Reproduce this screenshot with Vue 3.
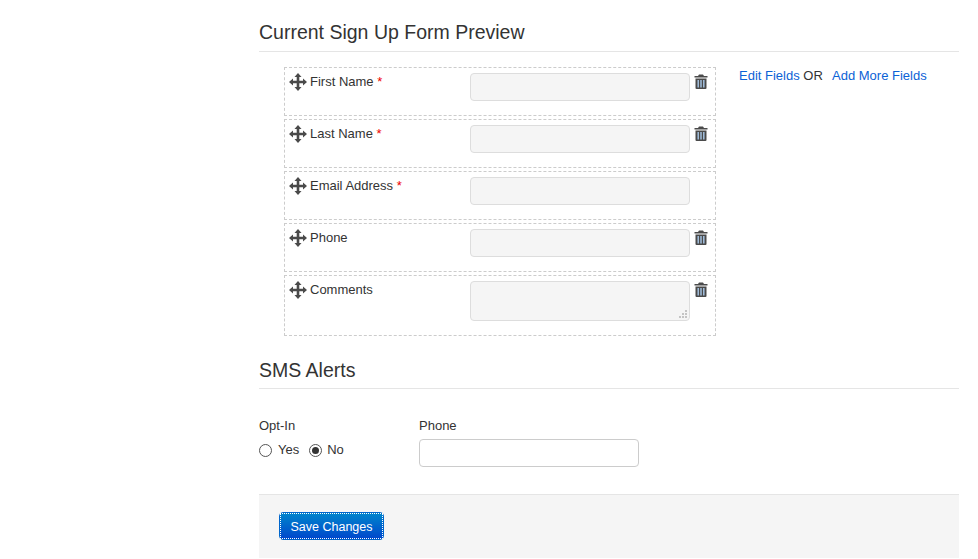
<template>
  <div class="page">
    <h2 class="title">Current Sign Up Form Preview</h2>

    <div class="preview">
      <div class="fields">
        <div v-for="field in fields" :key="field.label" class="field" :class="{ tall: field.textarea }">
          <div class="label-wrap">
            <svg class="move" viewBox="0 0 18 18" width="18" height="18">
              <path d="M9 0 L12.5 4 H10.3 V7.7 H14 V5.5 L18 9 L14 12.5 V10.3 H10.3 V14 H12.5 L9 18 L5.5 14 H7.7 V10.3 H4 V12.5 L0 9 L4 5.5 V7.7 H7.7 V4 H5.5 Z" fill="#4a4a4a" />
            </svg>
            <span class="label">{{ field.label }}<span v-if="field.required" class="req"> *</span></span>
          </div>
          <div class="control" :class="{ area: field.textarea }">
            <svg v-if="field.textarea" class="grip" viewBox="0 0 9 9" width="9" height="9">
              <path d="M6 0h2v2H6zM3 3h2v2H3zM6 3h2v2H6zM0 6h2v2H0zM3 6h2v2H3zM6 6h2v2H6z" fill="#c4c4c4" />
            </svg>
          </div>
          <svg v-if="field.removable" class="trash" viewBox="0 0 14 15" width="14" height="15">
            <path d="M5 0.5h4l1 1.5h3.5v1.5H0.5V2H4z" fill="#4a4a4a" />
            <path d="M1.5 4.5h11V14a1 1 0 0 1-1 1h-9a1 1 0 0 1-1-1z" fill="#4a4a4a" />
            <path d="M3.5 6h1.4v7.5H3.5zM6.3 6h1.4v7.5H6.3zM9.1 6h1.4v7.5H9.1z" fill="#a9c8e8" />
          </svg>
        </div>
      </div>
      <div class="links">
        <a href="#">Edit Fields</a> OR &nbsp;<a class="more" href="#">Add More Fields</a>
      </div>
    </div>

    <h2 class="title sms">SMS Alerts</h2>

    <div class="sms-row">
      <div class="opt">
        <div class="small-label">Opt-In</div>
        <div class="radios">
          <span class="radio"></span><span class="radio-text">Yes</span>
          <span class="radio on"></span><span>No</span>
        </div>
      </div>
      <div class="phone">
        <div class="small-label">Phone</div>
        <input class="phone-input" type="text" />
      </div>
    </div>

    <div class="actions">
      <button class="save" type="button"><span>Save Changes</span></button>
    </div>
  </div>
</template>

<script setup>
const fields = [
  { label: "First Name", required: true, removable: true },
  { label: "Last Name", required: true, removable: true },
  { label: "Email Address", required: true, removable: false },
  { label: "Phone", required: false, removable: true },
  { label: "Comments", required: false, removable: true, textarea: true }
];
</script>

<style>
body {
  background: #fff;
  overflow: hidden;
}
</style>

<style scoped>
.page {
  width: 700px;
  margin-left: 259px;
  font-family: "Liberation Sans", Arial, sans-serif;
  font-size: 13px;
  line-height: 20px;
  color: #333;
}

.title {
  margin: 0;
  padding-top: 20px;
  height: 31px;
  font-size: 19.5px;
  line-height: 24px;
  font-weight: normal;
  border-bottom: 1px solid #e5e5e5;
}

.preview {
  display: flex;
  margin: 15px 0 0 25px;
}

.fields {
  width: 432px;
  display: flex;
  flex-direction: column;
  gap: 3px;
}

.field {
  display: flex;
  align-items: flex-start;
  height: 49px;
  box-sizing: border-box;
  padding: 5px 0 0 4px;
  border: 1px dashed #ccc;
}

.field.tall {
  height: 61px;
}

.label-wrap {
  width: 181px;
  display: flex;
  align-items: flex-start;
}

.move {
  flex: none;
  margin-right: 3px;
}

.label {
  position: relative;
  top: -1px;
}

.req {
  color: #e00;
}

.control {
  position: relative;
  width: 220px;
  height: 28px;
  box-sizing: border-box;
  background: #f5f5f5;
  border: 1px solid #ddd;
  border-radius: 4px;
}

.control.area {
  height: 40px;
}

.grip {
  position: absolute;
  right: 1px;
  bottom: 1px;
}

.trash {
  margin: 1px 0 0 4px;
}

.links {
  margin: -1px 0 0 23px;
  white-space: nowrap;
}

.links a {
  color: #0b62d6;
  text-decoration: none;
}

.links a.more {
  margin-left: 2px;
}

.title.sms {
  padding-top: 22px;
  height: 30px;
}

.sms-row {
  display: flex;
  margin-top: 26px;
}

.opt {
  width: 160px;
}

.small-label {
  height: 24px;
  position: relative;
  top: 1px;
}

.radios {
  display: flex;
  align-items: center;
  height: 20px;
  margin-top: 1px;
}

.radio {
  width: 11px;
  height: 11px;
  border: 1px solid #555;
  border-radius: 50%;
  margin-right: 6px;
  position: relative;
}

.radio.on {
  margin-right: 5px;
}

.radio-text {
  margin-right: 10px;
}

.radio.on::after {
  content: "";
  position: absolute;
  left: 2px;
  top: 2px;
  width: 7px;
  height: 7px;
  border-radius: 50%;
  background: #333;
}

.phone-input {
  display: block;
  width: 220px;
  height: 28px;
  box-sizing: border-box;
  margin: 0;
  background: #fff;
  border: 1px solid #ccc;
  border-radius: 4px;
}

.actions {
  margin-top: 27px;
  height: 64px;
  box-sizing: border-box;
  padding-top: 17px;
  background: #f5f5f5;
  border-top: 1px solid #e5e5e5;
}

.save {
  display: block;
  margin-left: 20px;
  width: 105px;
  height: 28px;
  padding: 0;
  background: linear-gradient(#0088cc, #0044cc);
  background-origin: border-box;
  border: 1px solid #0066cc;
  border-radius: 4px;
  color: #fff;
  font: 12.5px "Liberation Sans", Arial, sans-serif;
}

.save span {
  display: block;
  height: 100%;
  box-sizing: border-box;
  line-height: 26px;
  border: 1px dotted #fff;
}
</style>
